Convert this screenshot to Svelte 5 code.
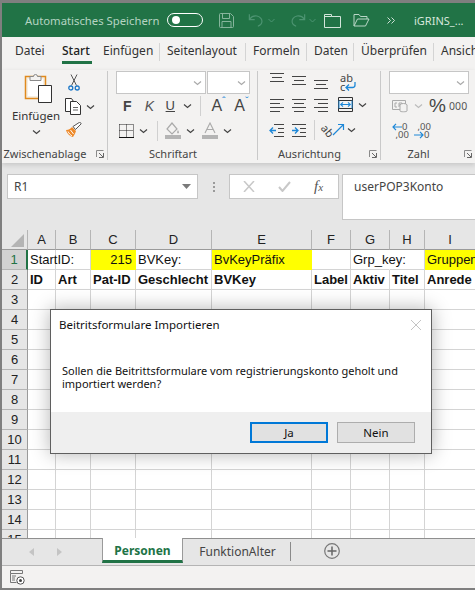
<script>
  const widths = [26, 28, 35, 45, 76, 100, 39, 39, 35, 51];
  const cols = ['A','B','C','D','E','F','G','H','I'];
  const row1 = [
    { t: 'StartID:' }, { t: '' }, { t: '215', y: true, r: true }, { t: 'BVKey:' },
    { t: 'BvKeyPräfix', y: true }, { t: '' }, { t: 'Grp_key:', over: true }, { t: '' }, { t: 'Gruppen', y: true, clip: true }
  ];
  const row2 = ['ID','Art','Pat-ID','Geschlecht','BVKey','Label','Aktiv','Titel','Anrede'];
  const empty = [3,4,5,6,7,8,9,10,11,12,13,14,15];
  const tabs = [
    { t: 'Datei', w: 47 }, { t: 'Start', w: 34, active: true }, { t: 'Einfügen', w: 64 }, { t: 'Seitenlayout', w: 86 },
    { t: 'Formeln', w: 61 }, { t: 'Daten', w: 47 }, { t: 'Überprüfen', w: 80 }, { t: 'Ansicht', w: 50 }
  ];
  const gridCols = widths.map((w) => w + 'px').join(' ');
</script>

{#snippet chev(c = '#444')}
  <svg class="chev" width="9" height="6" viewBox="0 0 9 6"><path d="M1 1.5l3.5 3 3.5-3" fill="none" stroke={c} stroke-width="1.2"/></svg>
{/snippet}
{#snippet launcher()}
  <svg class="launch" width="8" height="8" viewBox="0 0 8 8"><path d="M.5 7V.5H7.5M2 .5" fill="none" stroke="#8a8a8a"/><path d="M7.5 3V7.5H3M3 3l4 4" fill="none" stroke="#666"/></svg>
{/snippet}
{#snippet lines(kind)}
  <svg width="15" height="18" viewBox="0 0 15 18">
    {#if kind === 'top'}<path d="M1 2.5h14M3 6.5h10M1 10.5h14" stroke="#444" fill="none"/>{/if}
    {#if kind === 'mid'}<path d="M1 5.5h14M3 9.5h10M1 13.5h14" stroke="#444" fill="none"/>{/if}
    {#if kind === 'bot'}<path d="M1 9.5h14M3 13.5h10M1 17.5h14" stroke="#444" fill="none"/>{/if}
    {#if kind === 'l'}<path d="M1 3.5h14M1 7.5h10M1 11.5h14M1 15.5h10" stroke="#444" fill="none"/>{/if}
    {#if kind === 'c'}<path d="M1 3.5h14M3 7.5h10M1 11.5h14M3 15.5h10" stroke="#444" fill="none"/>{/if}
    {#if kind === 'r'}<path d="M1 3.5h14M5 7.5h10M1 11.5h14M5 15.5h10" stroke="#444" fill="none"/>{/if}
    {#if kind === 'out'}<path d="M5 3.5h10M9 7.5h6M9 11.5h6M5 15.5h10" stroke="#444" fill="none"/><path d="M7 9.5H1M4 6.5l-3 3 3 3" stroke="#1e88d8" fill="none" stroke-width="1.3"/>{/if}
    {#if kind === 'in'}<path d="M1 3.5h14M9 7.5h6M9 11.5h6M1 15.5h14" stroke="#444" fill="none"/><path d="M1 9.5h6M4 6.5l3 3-3 3" stroke="#1e88d8" fill="none" stroke-width="1.3"/>{/if}
  </svg>
{/snippet}

<div class="win">
  <header class="title">
    <span class="autosave">Automatisches Speichern</span>
    <span class="toggle"><i></i></span>
    <svg class="t-save" width="17" height="17" viewBox="0 0 17 17"><path d="M1.5 2.500a1 1 0 011-1h10l3 3v10a1 1 0 01-1 1h-12a1 1 0 01-1-1zM4.500 1.500v5h7v-5M4 15.500v-6h9v6" fill="none" stroke="#86b59c"/></svg>
    <svg class="t-undo" width="17" height="16" viewBox="0 0 19 16"><path d="M1.500 1.500v6h6M1.800 7C4 4 7 3 10 3.500c4 .7 6 4 5.500 7-.4 2.200-2 3.800-4.500 4.500" fill="none" stroke="#4d9472" stroke-width="1.300"/></svg>
    <svg class="t-dd" width="7" height="5" viewBox="0 0 7 5"><path d="M.5 1l3 3 3-3" fill="none" stroke="#4d9472"/></svg>
    <svg class="t-redo" width="17" height="16" viewBox="0 0 19 16"><path d="M17.500 1.500v6h-6M17.200 7C15 4 12 3 9 3.500c-4 .7-6 4-5.500 7 .4 2.200 2 3.800 4.500 4.500" fill="none" stroke="#4d9472" stroke-width="1.300"/></svg>
    <svg class="t-dd" width="7" height="5" viewBox="0 0 7 5"><path d="M.5 1l3 3 3-3" fill="none" stroke="#4d9472"/></svg>
    <svg class="t-new" width="17" height="15" viewBox="0 0 17 15"><path d="M.5 1.500h7v2h9v11H.5zM.5 3.500h7" fill="none" stroke="#d3e5da"/></svg>
    <svg class="t-open" width="17" height="14" viewBox="0 0 17 14"><path d="M1 13V1.500h5l1.500 2h6.500v2.500M1 13h11.500l3.500-7H4.500L1 13z" fill="none" stroke="#b9d6c6"/></svg>
    <svg class="more" width="8" height="7" viewBox="0 0 8 7"><path d="M.5.5l3 3-3 3M4.500.5l3 3-3 3" fill="none" stroke="#cfe2d7"/></svg>
    <span class="name">iGRINS_...</span>
  </header>

  <nav class="tabs">
    {#each tabs as tab, i}
      <span class="tab" class:first={i === 0} class:active={tab.active} class:sep={i >= 1 && i < tabs.length - 1} style="width:{tab.w}px">{tab.t}</span>
    {/each}
  </nav>

  <section class="ribbon">
    <div class="group g-clip">
      <div class="g-body clip-body">
        <div class="paste">
          <svg class="paste-ic" width="30" height="32" viewBox="0 0 30 32">
            <path d="M1.500 4.500h20v22h-20z" fill="#f6efe4" stroke="#e08a1e" stroke-width="1.500"/>
            <path d="M4 7h15v17H4z" fill="#fff"/>
            <path d="M6 8.500V4.500h3.500a2 2 0 014 0H17v4z" fill="#f3f2f1" stroke="#8a8a8a"/>
            <path d="M14.500 13.500h13v17h-13z" fill="#fff" stroke="#333"/>
          </svg>
          <span class="big">Einfügen</span>
          {@render chev()}
        </div>
        <div class="clip-tools">
          <svg width="12" height="17" viewBox="0 0 12 17"><path d="M3 .5l5.500 11M9 .5l-5.500 11" stroke="#555" fill="none"/><circle cx="2.800" cy="14" r="2" fill="none" stroke="#1e78c8" stroke-width="1.300"/><circle cx="9.200" cy="14" r="2" fill="none" stroke="#1e78c8" stroke-width="1.300"/></svg>
          <span class="tool-row">
            <svg width="17" height="17" viewBox="0 0 17 17"><path d="M5.500 13.500h-5V.5h6l2 3" fill="#fff" stroke="#333"/><path d="M5.500 3.500h6l4 4v9h-10z" fill="#fff" stroke="#333"/><path d="M8 9.500h5M8 12h5" stroke="#666"/></svg>
            {@render chev()}
          </span>
          <svg width="17" height="16" viewBox="0 0 17 16"><path d="M1 8c3 0 5-2 6-3l4 4c-1 3-2 4-3 6-2 0-6-3-7-7z" fill="#ee8a2a"/><path d="M3 9.500c1 2 2.500 3.500 4 4.500M5.500 8l3 4" stroke="#fff" fill="none"/><path d="M8 4.500l2.500 3 5.500-5.500c.5-1-1-2-1.800-1.500z" fill="#fff" stroke="#555"/></svg>
        </div>
      </div>
      <div class="g-label"><span></span><span class="lab">Zwischenablage</span>{@render launcher()}</div>
    </div>

    <div class="group g-font">
      <div class="g-body font-body">
        <div class="combos">
          <span class="combo c1">{@render chev('#aaa')}</span>
          <span class="combo c2">{@render chev('#aaa')}</span>
        </div>
        <div class="row r-font">
          <b class="f">F</b><i class="k">K</i><span class="uw"><u class="u">U</u></span>{@render chev()}
          <span class="vsep"></span>
          <span class="aa">A<sup>ˆ</sup></span><span class="aa a2">A<sup>ˇ</sup></span>
        </div>
        <div class="row r-bord">
          <svg width="15" height="14" viewBox="0 0 15 14"><path d="M.5.5h14M.5 6.500h14M.5.5v13M7.500.5v13M14.500.5v13" stroke="#222" fill="none" stroke-dasharray="1 1"/><path d="M0 13.500h15" stroke="#111"/></svg>
          {@render chev()}
          <span class="vsep"></span>
          <svg width="16" height="17" viewBox="0 0 16 17"><path d="M7 1L2 7l5 5 5-5z" fill="none" stroke="#aaa" stroke-width="1.200"/><path d="M13 8c1 2 1.500 3 0 3.500-1.300-.5-1-1.500 0-3.500z" fill="#aaa"/><path d="M0 13h16v4H0z" fill="#b4b4b4"/></svg>
          {@render chev()}
          <svg width="16" height="17" viewBox="0 0 16 17"><path d="M3 11L8 1l5 10M5 7.500h6" fill="none" stroke="#aaa" stroke-width="1.100"/><path d="M0 13h16v4H0z" fill="#b4b4b4"/></svg>
          {@render chev()}
        </div>
      </div>
      <div class="g-label"><span></span><span class="lab">Schriftart</span></div>
    </div>

    <div class="group g-align">
      <div class="g-body align-body">
        <div class="row">
          {@render lines('top')}{@render lines('mid')}{@render lines('bot')}
          <span class="wrap"><span>ab</span><span class="wc">c<svg width="11" height="9" viewBox="0 0 11 9"><path d="M10 0v3a2.500 2.500 0 01-2.500 2.500H1M4 2.500l-3 3 3 3" fill="none" stroke="#1e88d8" stroke-width="1.300"/></svg></span></span>
        </div>
        <div class="row">
          {@render lines('l')}{@render lines('c')}{@render lines('r')}
          <svg class="merge" width="15" height="15" viewBox="0 0 15 15"><path d="M.5.5h14v14H.5zM.5 3.500h14M.5 11.500h14" fill="none" stroke="#333"/><path d="M1 3.500v8M14 3.500v8" stroke="#1e88d8"/><path d="M2.500 7.500h10M5 5.300L2.700 7.500 5 9.700M10 5.300l2.300 2.200L10 9.700" fill="none" stroke="#1e88d8" stroke-width="1.100"/></svg>
          {@render chev()}
        </div>
        <div class="row r-ind">
          {@render lines('out')}{@render lines('in')}
          <span class="vsep"></span>
          <span class="orient"><span class="ab">ab</span><svg width="13" height="13" viewBox="0 0 13 13"><path d="M1 12L11 2M6 1.500h5.500V7" fill="none" stroke="#1e88d8" stroke-width="1.200"/></svg></span>
          {@render chev()}
        </div>
      </div>
      <div class="g-label"><span></span><span class="lab">Ausrichtung</span>{@render launcher()}</div>
    </div>

    <div class="group g-num">
      <div class="g-body num-body">
        <span class="combo c3">{@render chev('#aaa')}</span>
        <div class="row r-acc">
          <svg width="16" height="14" viewBox="0 0 16 14"><path d="M.5 1.500h13v9H.5z" fill="none" stroke="#aaa"/><path d="M5 4h-2v4h2M7 8V4h3v2H7" fill="none" stroke="#aaa"/><ellipse cx="11.500" cy="6" rx="3.500" ry="1.500" fill="#f3f2f1" stroke="#aaa"/><path d="M8 6v6c0 1 7 1 7 0V6" fill="#f3f2f1" stroke="#aaa"/></svg>
          {@render chev('#bbb')}
          <span class="pct">%</span>
          <span class="k000">000</span>
        </div>
        <div class="row r-dec">
          <span class="dec"><svg width="10" height="8" viewBox="0 0 10 8"><path d="M10 4H1M4 .8L1 4l3 3.200" fill="none" stroke="#1e88d8" stroke-width="1.200"/></svg><em>0</em><em class="dd">,00</em></span>
          <span class="dec d2"><em class="dd">,00</em><svg width="10" height="8" viewBox="0 0 10 8"><path d="M0 4h9M6 .8L9 4 6 7.200" fill="none" stroke="#1e88d8" stroke-width="1.200"/></svg><em>0</em></span>
        </div>
      </div>
      <div class="g-label"><span></span><span class="lab">Zahl</span>{@render launcher()}</div>
    </div>
  </section>

  <section class="formula">
    <div class="namebox"><span>R1</span><svg width="9" height="5" viewBox="0 0 9 5"><path d="M0 0h9L4.500 5z" fill="#7a7a7a"/></svg></div>
    <span class="dots"><i></i><i></i><i></i></span>
    <div class="fx">
      <svg width="12" height="11" viewBox="0 0 12 11"><path d="M1 0l10 11M11 0L1 11" stroke="#c8c8c8" stroke-width="1.500"/></svg>
      <svg width="13" height="11" viewBox="0 0 13 11"><path d="M1 6l3.500 4L12 1" stroke="#c8c8c8" stroke-width="2" fill="none"/></svg>
      <span class="fxl">f<span class="x">x</span></span>
    </div>
    <div class="finput">userPOP3Konto</div>
  </section>

  <section class="sheet" style="grid-template-columns:{gridCols}">
    <div class="corner"><svg width="13" height="13" viewBox="0 0 13 13"><path d="M13 0v13H0z" fill="#b4b4b4"/></svg></div>
    {#each cols as c}<div class="ch">{c}</div>{/each}

    <div class="rh sel">1</div>
    {#each row1 as c}
      <div class="cell" class:y={c.y} class:right={c.r} class:noline={c.over}>{c.t}</div>
    {/each}

    <div class="rh">2</div>
    {#each row2 as t}<div class="cell bold">{t}</div>{/each}

    {#each empty as n}
      <div class="rh">{n}</div>
      {#each cols as c}<div class="cell"></div>{/each}
    {/each}
  </section>

  <footer class="sheetbar">
    <span class="arrows">
      <svg width="5" height="8" viewBox="0 0 5 8"><path d="M5 0v8L0 4z" fill="#c4c4c4"/></svg>
      <svg width="5" height="8" viewBox="0 0 5 8"><path d="M0 0v8l5-4z" fill="#c4c4c4"/></svg>
    </span>
    <span class="stab">Personen</span>
    <span class="stab2">FunktionAlter</span>
    <span class="plus"><svg width="16" height="16" viewBox="0 0 16 16"><circle cx="8" cy="8" r="7.300" fill="none" stroke="#777" stroke-width="1.200"/><path d="M8 3.500v9M3.500 8h9" stroke="#666" stroke-width="1.500"/></svg></span>
  </footer>
  <footer class="status">
    <svg width="15" height="15" viewBox="0 0 15 15"><path d="M.5.5h12v3H.5zM.5 3.500v9h6" fill="none" stroke="#777"/><path d="M2 6h4M2 8h3M2 10h3" stroke="#777"/><circle cx="10.500" cy="10.500" r="3.700" fill="#fff" stroke="#555"/><circle cx="10.500" cy="10.500" r="1.500" fill="#444"/></svg>
  </footer>

  <div class="dialog">
    <div class="d-top">
      <div class="d-title"><span>Beitritsformulare Importieren</span><svg width="10" height="10" viewBox="0 0 10 10"><path d="M0 0l10 10M10 0L0 10" stroke="#c4c4c4"/></svg></div>
      <p>Sollen die Beitrittsformulare vom registrierungskonto geholt und importiert werden?</p>
    </div>
    <div class="d-foot">
      <button class="primary">Ja</button>
      <button>Nein</button>
    </div>
  </div>
</div>

<style>
  :global(body) { margin: 0; background: #fff; }
  .win {
    position: relative; width: 475px; height: 590px; box-sizing: border-box; overflow: hidden;
    border-top: 3px solid #7f7f7f; border-left: 2px solid #7f7f7f; border-bottom: 2px solid #7f7f7f;
    display: flex; flex-direction: column;
    font-family: "Noto Sans", "Open Sans", sans-serif; color: #333;
  }
  svg { display: block; flex: none; }

  .title { height: 34px; flex: none; background: #217346; display: flex; align-items: center; padding-left: 23px; font-size: 11.300px; }
  .autosave { color: #b5d3c2; width: 142px; white-space: nowrap; }
  .toggle { width: 36px; height: 14px; box-sizing: border-box; border: 1px solid #fff; border-radius: 8px; display: flex; align-items: center; padding-left: 4px; }
  .toggle i { width: 8px; height: 8px; border-radius: 50%; background: #fff; }
  .t-save { margin-left: 15px; }
  .t-undo { margin-left: 13px; }
  .t-dd { margin-left: 3px; }
  .t-redo { margin-left: 14px; }
  .t-new { margin-left: 8px; }
  .t-open { margin-left: 12px; }
  .more { margin-left: 17px; }
  .name { color: #d7e7dd; margin-left: 19px; font-size: 11px; white-space: nowrap; }

  .tabs { height: 33px; flex: none; background: #f3f2f1; display: flex; font-size: 12px; color: #333; white-space: nowrap; padding-left: 13px; }
  .tab { box-sizing: border-box; height: 24px; margin-top: 6px; line-height: 15px; flex: none; display: block; }
  .tab.sep { border-right: 1px solid #d4d4d4; height: 18px; padding-left: 7px; }
  .tab:last-child { padding-left: 7px; }
  .tab.active { color: #222; padding-left: 0; font-weight: 500; border-right: 0; }
  .tab.first { width: 47px; }
  .tab.active::after { content: ""; display: block; height: 3px; background: #217346; margin-top: 3px; width: 30px; }

  .ribbon { height: 93px; flex: none; background: #f3f2f1; display: flex; box-shadow: 0 2px 5px rgba(0,0,0,.14); position: relative; z-index: 1; font-size: 12px; overflow: hidden; }
  .group { flex: none; height: 89px; box-sizing: border-box; border-right: 1px solid #c9c9c9; display: flex; flex-direction: column; padding-top: 0; margin-top: 1px; }
  .g-body { height: 75px; flex: none; }
  .g-label { display: grid; grid-template-columns: 1fr auto 1fr 16px; align-items: center; height: 15px; color: #444; font-size: 11px; padding-right: 3px; }
  .lab { white-space: nowrap; line-height: 15px; }
  .launch { grid-column: 4; justify-self: end; }
  .g-clip { width: 106px; }
  .g-font { width: 150px; }
  .g-align { width: 123px; }
  .g-num { width: 94px; border-right: 0; }

  .clip-body { display: flex; padding-left: 10px; }
  .paste { width: 48px; display: flex; flex-direction: column; align-items: center; padding-top: 1px; }
  .paste-ic { margin-left: 5px; }
  .big { font-size: 11.500px; line-height: 14px; margin-top: 5px; }
  .paste .chev { margin-top: 6px; }
  .clip-tools { display: flex; flex-direction: column; margin-left: 5px; padding-top: 3px; gap: 7px; align-items: flex-start; }
  .clip-tools > svg:first-child { margin-left: 3px; }
  .tool-row { display: flex; gap: 4px; align-items: center; }

  .row { display: flex; align-items: center; }
  .combos { display: flex; gap: 1px; padding-left: 8px; }
  .combo { box-sizing: border-box; height: 23px; background: #fff; border: 1px solid #c6c6c6; display: flex; align-items: center; justify-content: flex-end; padding-right: 3px; flex: none; }
  .c1 { width: 90px; }
  .c2 { width: 43px; }
  .c3 { width: 80px; margin-left: 8px; }
  .font-body .row, .align-body .row, .num-body .row { height: 25px; }
  .r-font { margin-top: -1px; padding-left: 15px; font-family: "Liberation Sans", sans-serif; }
  .f { font-size: 14px; width: 22px; color: #444; }
  .k { font-size: 14px; width: 21px; color: #555; font-weight: 400; }
  .uw { width: 18px; }
  .u { font-size: 13px; color: #444; }
  .r-font .chev { margin-right: 8px; }
  .vsep { width: 1px; height: 20px; background: #d0d0d0; flex: none; }
  .aa { font-size: 16px; color: #444; margin-left: 10px; width: 23px; white-space: nowrap; line-height: 1; }
  .a2 { margin-left: 0; font-size: 16px; }
  .aa sup { color: #1e88d8; font-size: 11px; line-height: 0; }
  .r-bord { padding-left: 11px; }
  .r-bord .chev { margin: 0 7px 0 5px; }
  .r-bord .vsep { margin: 0 7px 0 2px; }

  .align-body { margin-top: -4px; height: 79px; }
  .align-body .row { padding-left: 11px; gap: 7px; }
  .wrap { display: flex; flex-direction: column; font-size: 11px; line-height: 9px; margin-left: 5px; color: #444; padding-top: 5px; }
  .wc { display: flex; align-items: center; gap: 0; }
  .merge { margin-left: 3px; }
  .align-body .row .chev { margin-left: -2px; }
  .r-ind .vsep { margin: 0 0 0 1px; }
  .orient { display: flex; align-items: center; }
  .ab { font-size: 11px; display: block; transform: rotate(50deg); width: 10px; color: #444; line-height: 1; }
  .align-body .r-ind .chev { margin-left: -5px; }

  .num-body .r-acc { margin-top: -1px; padding-left: 11px; }
  .num-body .r-dec { padding-left: 11px; }
  .r-acc .chev { margin-left: 6px; }
  .pct { font-size: 19px; margin-left: 6px; color: #444; line-height: 1; font-family: "Liberation Sans", sans-serif; }
  .k000 { font-size: 10.500px; color: #555; margin-left: 3px; letter-spacing: .2px; }
  .r-dec { gap: 5px; }
  .dec { display: grid; grid-template-columns: 10px 7px; width: 17px; font-size: 9.500px; line-height: 8px; color: #555; align-items: center; }
  .dec em { font-style: normal; white-space: nowrap; }
  .dec .dd { grid-column: 1 / 3; justify-self: end; }

  .formula { height: 67px; flex: none; background: #e6e6e6; display: flex; align-items: flex-start; padding: 11px 0 0 5px; box-sizing: border-box; }
  .namebox { width: 191px; height: 25px; box-sizing: border-box; background: #fff; border: 1px solid #c6c6c6; display: flex; align-items: center; justify-content: space-between; padding: 0 6px; font-size: 12px; color: #444; flex: none; }
  .dots { width: 31px; height: 25px; display: flex; flex-direction: column; align-items: center; justify-content: center; gap: 2px; flex: none; }
  .dots i { width: 2px; height: 2px; background: #9a9a9a; }
  .fx { width: 110px; height: 25px; box-sizing: border-box; background: #fff; border: 1px solid #c6c6c6; display: flex; align-items: center; flex: none; padding-left: 13px; }
  .fx svg:nth-child(2) { margin-left: 23px; }
  .fxl { font-family: "Liberation Serif", serif; font-style: italic; font-size: 15px; color: #555; margin-left: 23px; line-height: 1; }
  .fxl .x { font-size: 11px; }
  .finput { flex: 1; height: 46px; margin-left: 3px; box-sizing: border-box; background: #fff; border: 1px solid #c6c6c6; border-right: 0; padding: 3px 0 0 11px; font-size: 12px; color: #444; }

  .sheet { height: 308px; flex: none; display: grid; grid-auto-rows: 20px; overflow: hidden; background: #fff; font-family: "Liberation Sans", sans-serif; font-size: 13px; color: #111; }
  .corner { background: #e6e6e6; border-right: 1px solid #b5b5b5; border-bottom: 1px solid #9a9a9a; display: flex; align-items: flex-end; justify-content: flex-end; padding: 0 3px 2px 0; box-sizing: border-box; }
  .ch { background: #e6e6e6; border-right: 1px solid #b5b5b5; border-bottom: 1px solid #9a9a9a; text-align: center; line-height: 19px; box-sizing: border-box; color: #222; }
  .rh { background: #e6e6e6; border-right: 1px solid #9a9a9a; border-bottom: 1px solid #b5b5b5; text-align: center; line-height: 19px; box-sizing: border-box; color: #222; }
  .rh.sel { background: #d2d2d2; color: #217346; border-right: 2px solid #217346; }
  .cell { border-right: 1px solid #d4d4d4; border-bottom: 1px solid #d4d4d4; box-sizing: border-box; padding: 0 2px; line-height: 19px; white-space: nowrap; min-width: 0; position: relative; }
  .cell.y { background: #ffff00; border-right-color: #ffff00; border-bottom-color: #ffff00; overflow: hidden; }
  .cell.right { text-align: right; padding-right: 3px; }
  .cell.noline { border-right-color: transparent; }
  .bold { font-weight: 700; }

  .sheetbar { height: 28px; flex: none; background: #e6e6e6; border-bottom: 1px solid #b4b4b4; box-sizing: border-box; display: flex; align-items: flex-start; box-shadow: inset 0 1px 0 #8f8f8f; }
  .arrows { width: 100px; flex: none; height: 27px; display: flex; align-items: center; gap: 23px; padding-left: 27px; box-sizing: border-box; }
  .stab { width: 81px; height: 25px; flex: none; box-sizing: border-box; background: #fff; border: 1px solid #9a9a9a; border-top: 0; border-bottom: 3px solid #217346; text-align: center; font-weight: 700; font-size: 12px; color: #217346; line-height: 25px; }
  .stab2 { width: 108px; height: 19px; margin-top: 4px; flex: none; box-sizing: border-box; border-right: 1px solid #8a8a8a; text-align: center; font-size: 12px; color: #444; line-height: 19px; padding-left: 2px; }
  .plus { margin: 5px 0 0 33px; }
  .status { height: 22px; flex: none; background: #f3f2f1; display: flex; align-items: center; padding-left: 8px; box-sizing: border-box; }

  .dialog { position: absolute; left: 48px; top: 306px; width: 382px; height: 145px; box-sizing: border-box; background: #fff; border: 1px solid #5f5f5f; box-shadow: 0 0 18px rgba(0,0,0,.3); display: flex; flex-direction: column; z-index: 3; font-size: 11px; color: #111; }
  .d-top { height: 102px; flex: none; padding: 7px 10px 0 8px; box-sizing: border-box; }
  .d-title { display: flex; justify-content: space-between; align-items: center; font-size: 11.500px; line-height: 16px; }
  p { margin: 31px 0 0 3px; line-height: 13px; width: 345px; }
  .d-foot { flex: 1; background: #efefef; display: flex; gap: 9px; padding: 10px 16px 0 0; justify-content: flex-end; box-sizing: border-box; font-size: 11.500px; }
  button { width: 78px; height: 21px; box-sizing: border-box; background: #e1e1e1; border: 1px solid #adadad; font: inherit; color: #111; padding: 0; }
  .primary { border: 2px solid #0078d7; }
</style>
